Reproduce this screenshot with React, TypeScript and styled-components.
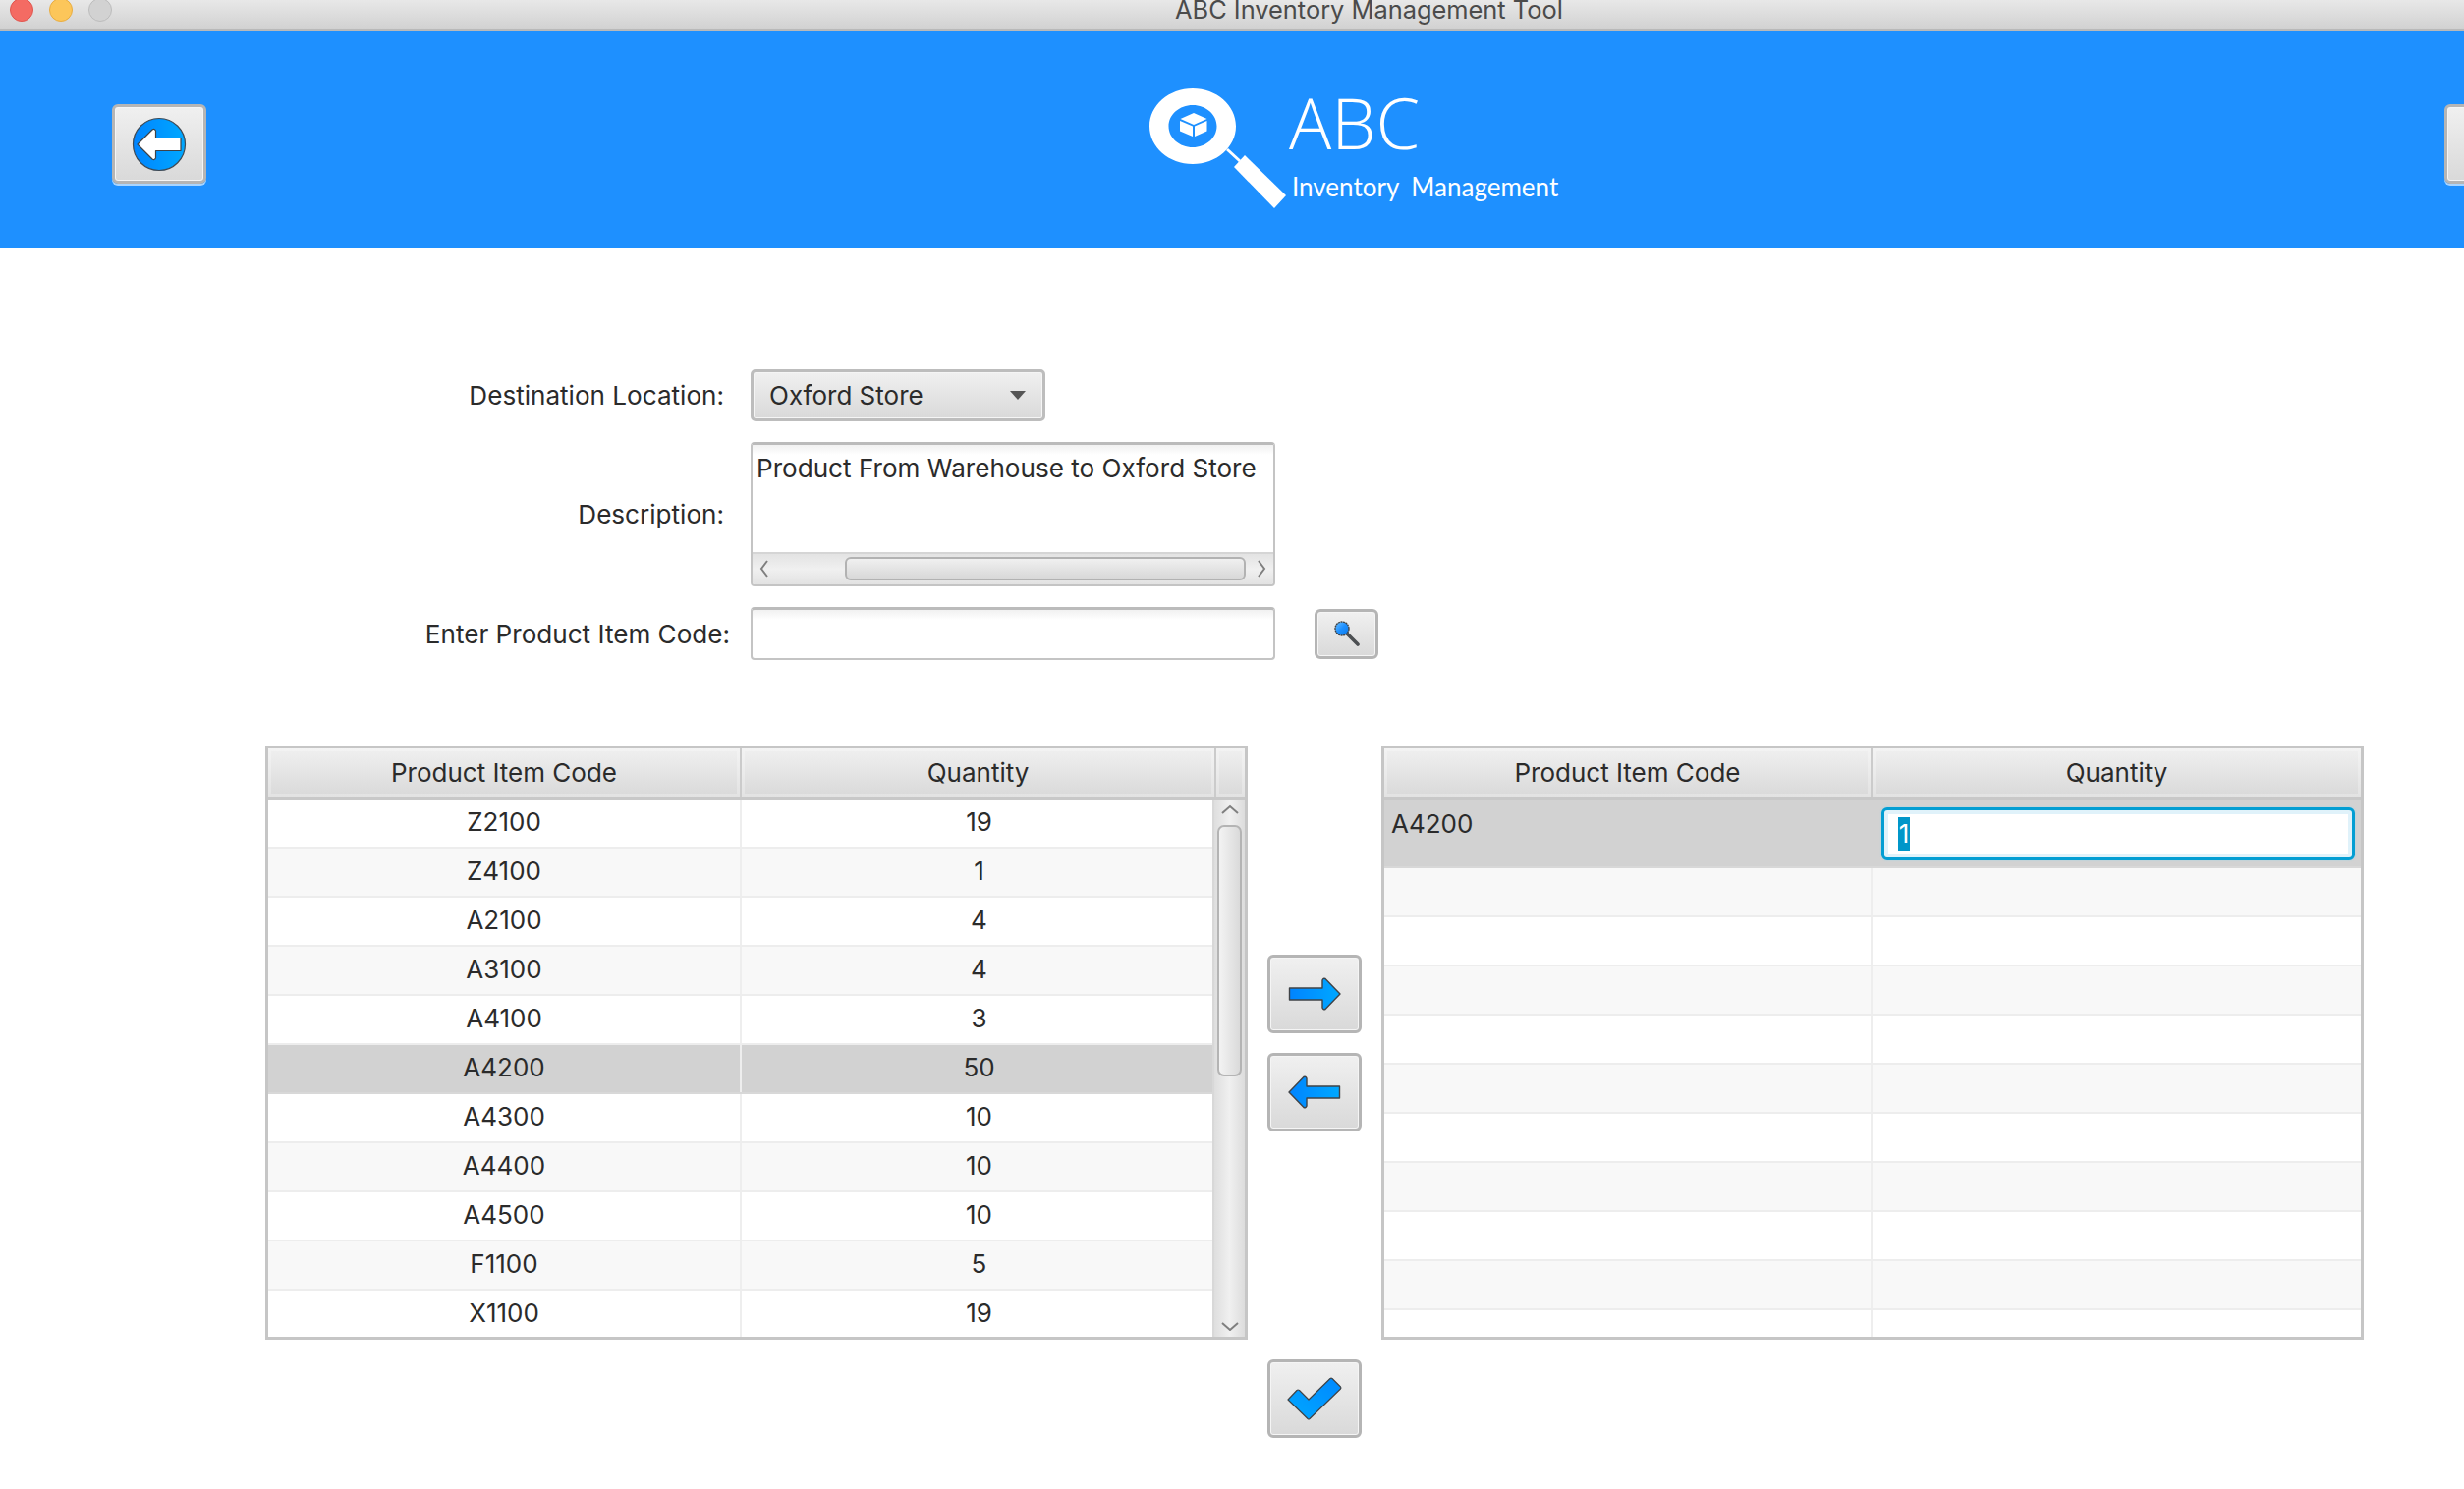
import styled, { createGlobalStyle } from "styled-components";

const GlobalStyle = createGlobalStyle`
  html, body {
    margin: 0;
    padding: 0;
    background: #fff;
  }
  body {
    width: 2508px;
    height: 1516px;
    overflow: hidden;
    font-family: Inter, "Liberation Sans", sans-serif;
    color: #2b2b2b;
  }
  * {
    box-sizing: border-box;
  }
`;

const TitleBar = styled.div`
  height: 32px;
  display: flex;
  align-items: flex-start;
  padding-left: 10px;
  background: linear-gradient(#e8e8e8, #d1d1d1);
  border-bottom: 2px solid #b9b9b9;
  overflow: hidden;
`;

const Lights = styled.div`
  display: flex;
  gap: 16px;
  margin-top: -2px;
`;

const Light = styled.span<{ $fill: string; $edge: string }>`
  width: 24px;
  height: 24px;
  border-radius: 50%;
  background: ${({ $fill }) => $fill};
  border: 1px solid ${({ $edge }) => $edge};
`;

const WindowTitle = styled.span`
  margin-left: 1082px;
  margin-top: -2px;
  font-size: 25.4px;
  line-height: 24px;
  color: #4b4b4b;
  white-space: nowrap;
`;

const Header = styled.header`
  height: 220px;
  background: #1e90ff;
  display: flex;
  align-items: flex-start;
  padding-left: 114px;
  overflow: hidden;
`;

const ToolButton = styled.button<{ $w?: number; $h?: number }>`
  flex: none;
  width: ${({ $w }) => $w ?? 96}px;
  height: ${({ $h }) => $h ?? 80}px;
  padding: 0;
  display: flex;
  align-items: center;
  justify-content: center;
  border: 3px solid #b5b5b5;
  border-radius: 6px;
  background: linear-gradient(#f0f0f0, #d9d9d9);
  box-shadow: inset 0 0 0 1px #f5f5f5;
`;

const BackButton = styled(ToolButton)`
  margin-top: 74px;
  box-shadow: inset 0 0 0 1px #f5f5f5, 0 2px 0 #a9d5ff;
`;

const ForwardButton = styled(BackButton)`
  margin-left: 905px;
`;

const Brand = styled.div`
  flex: none;
  margin-left: 960px;
  margin-top: 58px;
  width: 413px;
  display: flex;
  svg {
    flex: none;
  }
`;

const BrandText = styled.div`
  margin-left: 2px;
  color: #fff;
  white-space: nowrap;
`;

const BrandName = styled.div`
  font-family: "Open Sans", sans-serif;
  font-weight: 300;
  font-size: 72px;
  line-height: 72px;
  margin-top: -2px;
`;

const BrandTag = styled.div`
  font-family: Lato, sans-serif;
  font-size: 26px;
  line-height: 30px;
  margin-left: 3px;
  margin-top: 15px;
  word-spacing: 6px;
`;

const FormGrid = styled.div`
  display: grid;
  grid-template-columns: 737px 534px auto;
  column-gap: 27px;
  row-gap: 21px;
  align-items: center;
  justify-content: start;
  padding-top: 124px;
`;

const FieldLabel = styled.label<{ $over?: number }>`
  text-align: right;
  font-size: 26.1px;
  white-space: nowrap;
  margin-right: ${({ $over }) => -($over ?? 0)}px;
`;

const ComboBox = styled.div`
  width: 300px;
  height: 53px;
  display: flex;
  align-items: center;
  justify-content: space-between;
  padding: 0 17px 0 16px;
  font-size: 26px;
  border: 3px solid #bdbdbd;
  border-radius: 5px;
  background: linear-gradient(#f0f0f0, #d9d9d9);
  box-shadow: inset 0 0 0 1px #f5f5f5;
`;

const ComboArrow = styled.span`
  width: 0;
  height: 0;
  border-left: 8px solid transparent;
  border-right: 8px solid transparent;
  border-top: 9px solid #555;
`;

const TextArea = styled.div`
  height: 147px;
  display: flex;
  flex-direction: column;
  border: 2px solid #c4c4c4;
  border-top: 3px solid #bbb;
  border-radius: 4px;
  overflow: hidden;
`;

const TextAreaBody = styled.div`
  flex: 1;
  padding: 8px 0 0 4px;
  font-size: 26.1px;
  line-height: 32px;
  white-space: nowrap;
  background: linear-gradient(#f1f1f1, #fff 10px);
`;

const HScroll = styled.div`
  height: 33px;
  display: flex;
  align-items: center;
  padding-bottom: 2px;
  border-top: 2px solid #d5d5d5;
  background: linear-gradient(#e3e3e3, #f0f0f0 50%, #e2e2e2);
`;

const HThumb = styled.div`
  width: 408px;
  height: 24px;
  margin-left: 93px;
  border: 2px solid #b2b2b2;
  border-radius: 6px;
  background: linear-gradient(#f0f0f0, #d8d8d8);
`;

const ScrollChevron = styled.svg`
  flex: none;
  display: block;
`;

const HChevronLeft = styled(ScrollChevron)`
  margin-left: 7px;
  margin-right: -16px;
`;

const HChevronRight = styled(ScrollChevron)`
  margin-left: 11px;
`;

const TextInput = styled.div`
  height: 54px;
  border: 2px solid #c4c4c4;
  border-top: 3px solid #bbb;
  border-radius: 4px;
  background: linear-gradient(#f1f1f1, #fff 10px);
`;

const SearchButton = styled(ToolButton)`
  margin-left: 13px;
`;

const TablesRow = styled.div`
  display: grid;
  grid-template-columns: 1000px 96px 1000px;
  column-gap: 20px;
  align-items: start;
  padding: 88px 0 0 270px;
`;

const Table = styled.div`
  height: 604px;
  border: 3px solid #c6c6c6;
  border-top-width: 2px;
  overflow: hidden;
  background: #fff;
`;

const HeadRow = styled.div<{ $cols: string }>`
  height: 52px;
  display: grid;
  grid-template-columns: ${({ $cols }) => $cols};
  border-bottom: 3px solid #c8c8c8;
`;

const HeadCell = styled.div`
  display: flex;
  align-items: center;
  justify-content: center;
  font-size: 26px;
  white-space: nowrap;
  background: linear-gradient(#f0f0f0, #d9d9d9);
  box-shadow: inset 0 0 0 3px rgba(255, 255, 255, 0.25);
  border-right: 2px solid #cbcbcb;
  &:last-child {
    border-right: 0;
  }
`;

const TableBody = styled.div`
  display: flex;
`;

const Rows = styled.div`
  flex: 1;
  min-width: 0;
`;

const Row = styled.div<{ $cols: string; $shade?: boolean; $selected?: boolean; $tall?: boolean }>`
  height: ${({ $tall }) => ($tall ? 70 : 50)}px;
  display: grid;
  grid-template-columns: ${({ $cols }) => $cols};
  background: ${({ $selected, $shade }) => ($selected ? "#d2d2d2" : $shade ? "#f8f8f8" : "#fff")};
  border-bottom: 2px solid ${({ $selected }) => ($selected ? "#d8d8d8" : "#ededed")};
`;

const Cell = styled.div<{ $left?: boolean; $rule?: boolean }>`
  display: flex;
  align-items: flex-start;
  justify-content: ${({ $left }) => ($left ? "flex-start" : "center")};
  padding: ${({ $left }) => ($left ? "9px 0 0 7px" : "7px 0 0")};
  font-size: 26px;
  line-height: 32px;
  ${({ $rule }) => $rule && "border-right: 2px solid #eeeeee;"}
`;

const VScroll = styled.div`
  flex: none;
  width: 33px;
  height: 549px;
  display: flex;
  flex-direction: column;
  align-items: center;
  background: linear-gradient(90deg, #dedede, #f0f0f0 50%, #dcdcdc);
  border-left: 2px solid #d8d8d8;
`;

const VThumb = styled.div`
  width: 25px;
  height: 256px;
  margin-top: 11px;
  border: 2px solid #b4b4b4;
  border-radius: 7px;
  background: linear-gradient(90deg, #f3f3f3, #dadada);
`;

const VChevronTop = styled(ScrollChevron)`
  margin-top: 5px;
`;

const VChevronBottom = styled(ScrollChevron)`
  margin-top: 249px;
`;

const CellEditor = styled.div`
  height: 54px;
  margin: 8px 6px 0 9px;
  padding: 7px 14px;
  border: 3px solid #039ed3;
  border-radius: 6px;
  background: #fff;
  box-shadow: inset 0 0 0 4px #e0f2fa, 0 0 2px #9bd3e8;
`;

const Selected = styled.span`
  display: inline-block;
  width: 12px;
  height: 34px;
  background: #0096c9;
  color: #fff;
  font-size: 26px;
  line-height: 34px;
  text-align: center;
`;

const ActionColumn = styled.div`
  display: flex;
  flex-direction: column;
  gap: 20px;
  padding-top: 212px;
`;

const ConfirmButton = styled(ToolButton)`
  margin-top: 212px;
`;

const COLS_LEFT = "482px 483px";
const COLS_RIGHT = "497px 1fr";

const stock: [string, number][] = [
  ["Z2100", 19],
  ["Z4100", 1],
  ["A2100", 4],
  ["A3100", 4],
  ["A4100", 3],
  ["A4200", 50],
  ["A4300", 10],
  ["A4400", 10],
  ["A4500", 10],
  ["F1100", 5],
  ["X1100", 19],
];

const BlueDefs = ({ id, reverse }: { id: string; reverse?: boolean }) => (
  <defs>
    <linearGradient id={id} x1={reverse ? "1" : "0"} y1="0" x2={reverse ? "0" : "1"} y2="0">
      <stop offset="0" stopColor="#0084ff" />
      <stop offset="1" stopColor="#00a8ff" />
    </linearGradient>
  </defs>
);

const BackIcon = () => (
  <svg width="56" height="56" viewBox="0 0 56 56">
    <BlueDefs id="backBlue" />
    <circle cx="28" cy="28" r="26.5" fill="url(#backBlue)" stroke="#3f4a55" strokeWidth="1.2" />
    <path
      d="M6 28 L21 13 Q23 11.5 24.5 14 L24.5 21.5 L50 21.5 L50 34.5 L24.5 34.5 L24.5 42 Q23 44.5 21 43 Z"
      fill="#fff"
      stroke="#3f4347"
      strokeWidth="1.2"
      strokeLinejoin="round"
    />
  </svg>
);

const RightArrowIcon = () => (
  <svg width="54" height="34" viewBox="0 0 54 34">
    <BlueDefs id="rightBlue" />
    <path
      d="M1.5 11 L35 11 L35 3 Q36 0.5 38 1.5 L53 17 L38 32.5 Q36 33.5 35 31 L35 23 L1.5 23 Z"
      fill="url(#rightBlue)"
      stroke="#3f4347"
      strokeWidth="1.4"
      strokeLinejoin="round"
    />
  </svg>
);

const LeftArrowIcon = () => (
  <svg width="54" height="34" viewBox="0 0 54 34">
    <BlueDefs id="leftBlue" />
    <path
      d="M52.5 11 L19 11 L19 3 Q18 0.5 16 1.5 L1 17 L16 32.5 Q18 33.5 19 31 L19 23 L52.5 23 Z"
      fill="url(#leftBlue)"
      stroke="#3f4347"
      strokeWidth="1.4"
      strokeLinejoin="round"
    />
  </svg>
);

const CheckIcon = () => (
  <svg width="56" height="44" viewBox="0 0 56 44">
    <defs>
      <linearGradient id="checkBlue" x1="0" y1="1" x2="1" y2="0">
        <stop offset="0" stopColor="#00a8ff" />
        <stop offset="1" stopColor="#0088ff" />
      </linearGradient>
    </defs>
    <path
      d="M1 23 L10 13.5 Q11 12.5 12.5 13.5 L22 23 L44 1.5 Q45 0.7 46 1.5 L54.5 10 Q55.2 11 54.5 12 L23 42.5 Q22 43.3 21 42.5 Z"
      fill="url(#checkBlue)"
      stroke="#3f4347"
      strokeWidth="1.2"
      strokeLinejoin="round"
    />
  </svg>
);

const SearchIcon = () => (
  <svg width="26" height="26" viewBox="0 0 26 26">
    <defs>
      <linearGradient id="lensBlue" x1="0" y1="0" x2="1" y2="1">
        <stop offset="0" stopColor="#6cc0ff" />
        <stop offset="0.5" stopColor="#1c8fff" />
        <stop offset="1" stopColor="#0a78e8" />
      </linearGradient>
    </defs>
    <line x1="13" y1="13" x2="24" y2="24" stroke="#4c4f52" strokeWidth="3.6" strokeLinecap="round" />
    <circle cx="8" cy="8" r="7" fill="url(#lensBlue)" stroke="#3f4347" strokeWidth="1.4" strokeDasharray="2 0.6" />
  </svg>
);

const LogoMark = () => (
  <svg width="140" height="122" viewBox="0 0 140 122">
    <path fillRule="evenodd" fill="#fff" d="M44 0 C68.3 0 88 17.2 88 38.5 C88 59.8 68.3 77 44 77 C19.7 77 0 59.8 0 38.5 C0 17.2 19.7 0 44 0 Z M44 17 C30.5 17 19.5 26.6 19.5 38.5 C19.5 50.4 30.5 60 44 60 C57.5 60 68.5 50.4 68.5 38.5 C68.5 26.6 57.5 17 44 17 Z" />
    <path fill="#fff" d="M78 63 L80 61 L93 73 L91 75 Z" />
    <path fill="#fff" d="M86 80 L97 68 L139 109 L127 122 Z" />
    <path fill="#fff" d="M45 25 L58.5 31 L45 37 L31.5 31 Z" />
    <path fill="#fff" d="M31 33 L44 38.5 L44 49 L31 43.5 Z" />
    <path fill="#fff" d="M46 38.5 L58.5 33 L58.5 43.5 L46 49 Z" />
  </svg>
);

const Chevron = ({ dir }: { dir: "left" | "right" | "up" | "down" }) => {
  const horizontal = dir === "left" || dir === "right";
  const points = {
    left: "8,1 2,9 8,17",
    right: "2,1 8,9 2,17",
    up: "1,9 9,2 17,9",
    down: "1,2 9,9 17,2",
  }[dir];
  const Wrap = dir === "left" ? HChevronLeft : dir === "right" ? HChevronRight : dir === "up" ? VChevronTop : VChevronBottom;
  return (
    <Wrap width={horizontal ? 10 : 18} height={horizontal ? 18 : 10} viewBox={horizontal ? "0 0 10 18" : "0 0 18 10"}>
      <polyline points={points} fill="none" stroke="#7f7f7f" strokeWidth="2" />
    </Wrap>
  );
};

export default function App() {
  return (
    <>
      <GlobalStyle />
      <TitleBar>
        <Lights>
          <Light $fill="#f46b63" $edge="#e0564f" />
          <Light $fill="#fcc65a" $edge="#e8ad42" />
          <Light $fill="#d2d2d2" $edge="#bdbdbd" />
        </Lights>
        <WindowTitle>ABC Inventory Management Tool</WindowTitle>
      </TitleBar>

      <Header>
        <BackButton $w={96} $h={81}>
          <BackIcon />
        </BackButton>
        <Brand>
          <LogoMark />
          <BrandText>
            <BrandName>ABC</BrandName>
            <BrandTag>Inventory Management</BrandTag>
          </BrandText>
        </Brand>
        <ForwardButton $w={96} $h={81} />
      </Header>

      <FormGrid>
        <FieldLabel>Destination Location:</FieldLabel>
        <ComboBox>
          Oxford Store
          <ComboArrow />
        </ComboBox>
        <span />

        <FieldLabel>Description:</FieldLabel>
        <TextArea>
          <TextAreaBody>Product From Warehouse to Oxford Store</TextAreaBody>
          <HScroll>
            <Chevron dir="left" />
            <HThumb />
            <Chevron dir="right" />
          </HScroll>
        </TextArea>
        <span />

        <FieldLabel $over={6}>Enter Product Item Code:</FieldLabel>
        <TextInput />
        <SearchButton $w={65} $h={51}>
          <SearchIcon />
        </SearchButton>
      </FormGrid>

      <TablesRow>
        <Table>
          <HeadRow $cols="482px 483px 1fr">
            <HeadCell>Product Item Code</HeadCell>
            <HeadCell>Quantity</HeadCell>
            <HeadCell />
          </HeadRow>
          <TableBody>
            <Rows>
              {stock.map(([code, qty], i) => (
                <Row key={code} $cols={COLS_LEFT} $shade={i % 2 === 1} $selected={code === "A4200"}>
                  <Cell $rule>{code}</Cell>
                  <Cell>{qty}</Cell>
                </Row>
              ))}
            </Rows>
            <VScroll>
              <Chevron dir="up" />
              <VThumb />
              <Chevron dir="down" />
            </VScroll>
          </TableBody>
        </Table>

        <ActionColumn>
          <ToolButton>
            <RightArrowIcon />
          </ToolButton>
          <ToolButton>
            <LeftArrowIcon />
          </ToolButton>
          <ConfirmButton>
            <CheckIcon />
          </ConfirmButton>
        </ActionColumn>

        <Table>
          <HeadRow $cols={COLS_RIGHT}>
            <HeadCell>Product Item Code</HeadCell>
            <HeadCell>Quantity</HeadCell>
          </HeadRow>
          <Row $cols={COLS_RIGHT} $selected $tall>
            <Cell $left>A4200</Cell>
            <CellEditor>
              <Selected>1</Selected>
            </CellEditor>
          </Row>
          {Array.from({ length: 10 }, (_, i) => (
            <Row key={i} $cols={COLS_RIGHT} $shade={i % 2 === 0}>
              <Cell $rule />
              <Cell />
            </Row>
          ))}
        </Table>
      </TablesRow>
    </>
  );
}
